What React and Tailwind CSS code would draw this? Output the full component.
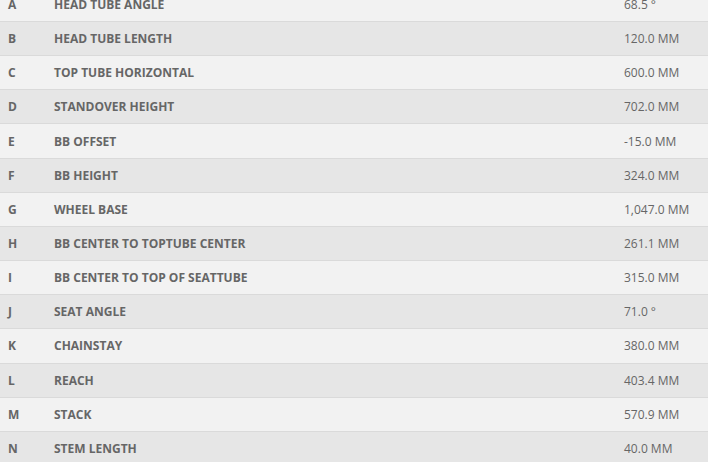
import React from "react";

const rows = [
  ["A", "HEAD TUBE ANGLE", "68.5 °"],
  ["B", "HEAD TUBE LENGTH", "120.0 MM"],
  ["C", "TOP TUBE HORIZONTAL", "600.0 MM"],
  ["D", "STANDOVER HEIGHT", "702.0 MM"],
  ["E", "BB OFFSET", "-15.0 MM"],
  ["F", "BB HEIGHT", "324.0 MM"],
  ["G", "WHEEL BASE", "1,047.0 MM"],
  ["H", "BB CENTER TO TOPTUBE CENTER", "261.1 MM"],
  ["I", "BB CENTER TO TOP OF SEATTUBE", "315.0 MM"],
  ["J", "SEAT ANGLE", "71.0 °"],
  ["K", "CHAINSTAY", "380.0 MM"],
  ["L", "REACH", "403.4 MM"],
  ["M", "STACK", "570.9 MM"],
  ["N", "STEM LENGTH", "40.0 MM"],
];

export default function App() {
  return (
    <div className="w-[708px] h-[462px] overflow-hidden bg-white font-['Open_Sans',sans-serif] text-[12px] text-[#666]">
      {/* geometry table, first row scrolled partly out of view */}
      <div className="-mt-[13.17px] flex flex-col">
        {rows.map(([key, label, value], i) => (
          <div
            key={key}
            className={
              "flex items-center h-[34.17px] pt-[1px] border-t border-[#dadada] " +
              (i % 2 === 0 ? "bg-[#f2f2f2]" : "bg-[#e6e6e6]")
            }
          >
            <span className="w-[54px] shrink-0 pl-[8px] font-bold">{key}</span>
            <span className="w-[570px] shrink-0 font-bold">{label}</span>
            <span>{value}</span>
          </div>
        ))}
      </div>
    </div>
  );
}
